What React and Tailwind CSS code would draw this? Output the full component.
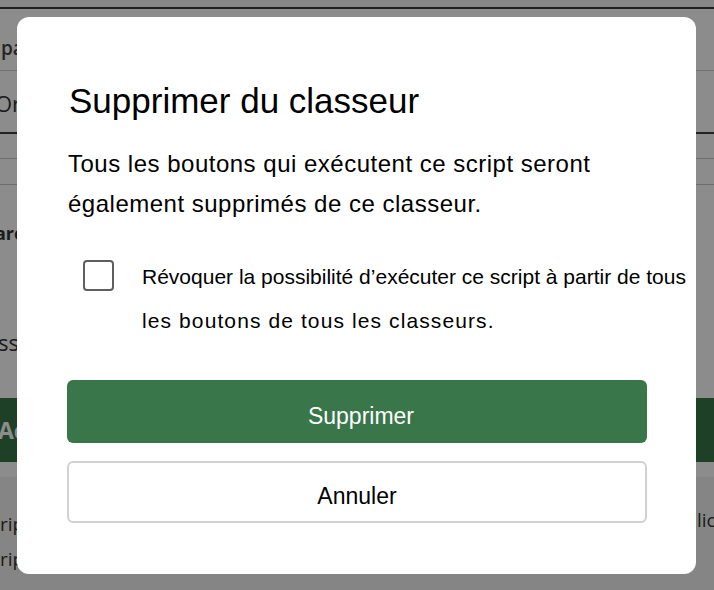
import React from "react";

export default function App() {
  return (
    <div className="relative h-[590px] w-full overflow-hidden bg-white font-['Liberation_Sans',Arial,sans-serif]">
      {/* page behind the dialog */}
      <div className="flex h-full w-full flex-col font-['Open_Sans',sans-serif] text-[#333]">
        <div className="h-[7px] bg-[#f5f5f5]"></div>
        <div className="h-[2px] bg-[#3a3a3a]"></div>
        <div className="flex h-[61px] items-end pb-[8px] pl-[1px] text-[19px] font-semibold text-[#444]">
          partagés
        </div>
        <div className="h-[1px] bg-[#cfcfcf]"></div>
        <div className="flex h-[61px] items-center -ml-[5px] pt-[3px] text-[22px]">Ordre</div>
        <div className="h-[2px] bg-[#3f3f3f]"></div>
        <div className="h-[24px]"></div>
        <div className="h-[1px] bg-[#c9c9c9]"></div>
        <div className="h-[25px]"></div>
        <div className="h-[1px] bg-[#c9c9c9]"></div>
        <div className="flex h-[96px] items-center -ml-[5px] text-[18px] font-bold">arent</div>
        <div className="h-[117px] pt-[48px] -ml-[2px] text-[22px] leading-[26px]">ssion</div>
        <div className="flex h-[64px] items-center bg-[#387648] -ml-[2px] text-[23px] font-bold text-white">
          Action
        </div>
        <div className="h-[15px]"></div>
        <div className="flex flex-1 justify-between bg-[#f3f3f3] pt-[30px] text-[19px] leading-[35px]">
          <div>
            <div>ripts</div>
            <div>ripts</div>
          </div>
          <div className="-mt-[4px] w-[17px] overflow-hidden whitespace-nowrap">lication</div>
        </div>
      </div>

      {/* modal overlay */}
      <div className="absolute inset-0 bg-black/45 pl-[17px] pt-[17px]">
        <div className="h-[557px] w-[679px] rounded-[12px] bg-white pl-[50px] pr-[49px] pt-[63px] text-black">
          <h2 className="ml-[2px] text-[35px] leading-[42px]">Supprimer du classeur</h2>
          <p className="ml-[1px] mt-[22px] text-[24px] leading-[40px] tracking-[0.5px]">
            Tous les boutons qui exécutent ce script seront également supprimés de ce classeur.
          </p>
          <label className="mt-[31px] flex pl-[16px]">
            <input
              type="checkbox"
              className="mt-[5px] h-[31px] w-[31px] shrink-0 appearance-none rounded-[4px] border-2 border-[#5f5f5f] bg-white"
            />
            <span className="ml-[28px] whitespace-nowrap text-[21px] leading-[44px]">
              Révoquer la possibilité d’exécuter ce script à partir de tous
              <br />
              <span className="tracking-[1.1px]">les boutons de tous les classeurs.</span>
            </span>
          </label>
          <button className="mt-[37px] block h-[63px] w-full rounded-[6px] bg-[#397649] pl-[8px] pt-[9px] text-[23px] text-white">
            Supprimer
          </button>
          <button className="mt-[18px] block h-[62px] w-full rounded-[6px] border-2 border-[#d1d1d1] bg-white pt-[8px] text-[23px] text-black">
            Annuler
          </button>
        </div>
      </div>
    </div>
  );
}
